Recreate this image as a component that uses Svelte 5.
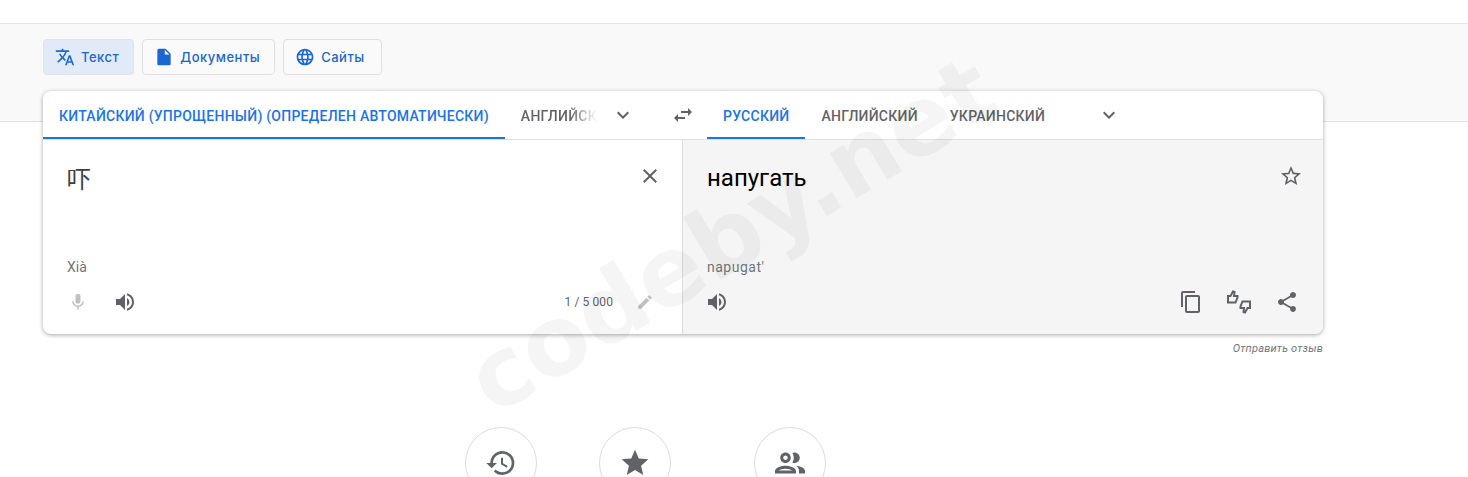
<script>
  const modes = [
    { label: 'Текст', icon: 'text', active: true },
    { label: 'Документы', icon: 'doc' },
    { label: 'Сайты', icon: 'web' }
  ]
  const paths = {
    text: 'M12.87 15.07l-2.54-2.51.03-.03A17.52 17.52 0 0 0 14.07 6H17V4h-7V2H8v2H1v2h11.17C11.5 7.92 10.44 9.75 9 11.35 8.07 10.32 7.3 9.19 6.69 8h-2c.73 1.63 1.73 3.17 2.98 4.56l-5.09 5.02L4 19l5-5 3.11 3.11.76-2.04zM18.5 10h-2L12 22h2l1.12-3h4.75L21 22h2l-4.5-12zm-2.62 7l1.62-4.33L19.12 17h-3.24z',
    doc: 'M14 2H6c-1.1 0-2 .9-2 2v16c0 1.1.9 2 2 2h12c1.1 0 2-.9 2-2V8l-6-6zm-1 7V3.5L18.5 9H13z',
    web: 'M11.99 2C6.47 2 2 6.48 2 12s4.47 10 9.99 10C17.52 22 22 17.52 22 12S17.52 2 11.99 2zm6.93 6h-2.95a15.65 15.65 0 0 0-1.38-3.56A8.03 8.03 0 0 1 18.92 8zM12 4.04c.83 1.2 1.48 2.53 1.91 3.96h-3.82c.43-1.43 1.08-2.76 1.91-3.96zM4.26 14C4.1 13.36 4 12.69 4 12s.1-1.36.26-2h3.38c-.08.66-.14 1.32-.14 2 0 .68.06 1.34.14 2H4.26zm.82 2h2.95c.32 1.25.78 2.45 1.38 3.56A7.987 7.987 0 0 1 5.08 16zm2.95-8H5.08a7.987 7.987 0 0 1 4.33-3.56A15.65 15.65 0 0 0 8.03 8zM12 19.96c-.83-1.2-1.48-2.53-1.91-3.96h3.82c-.43 1.43-1.08 2.76-1.91 3.96zM14.34 14H9.66c-.09-.66-.16-1.32-.16-2 0-.68.07-1.35.16-2h4.68c.09.65.16 1.32.16 2 0 .68-.07 1.34-.16 2zm.25 5.56c.6-1.11 1.06-2.31 1.38-3.56h2.95a8.03 8.03 0 0 1-4.33 3.56zM16.36 14c.08-.66.14-1.32.14-2 0-.68-.06-1.34-.14-2h3.38c.16.64.26 1.31.26 2s-.1 1.36-.26 2h-3.38z',
    chevron: 'M7.41 8.59L12 13.17l4.59-4.58L18 10l-6 6-6-6 1.41-1.41z',
    swap: 'M6.99 11L3 15l3.99 4v-3H14v-2H6.99v-3zM21 9l-3.99-4v3H10v2h7.01v3L21 9z',
    close: 'M19 6.41L17.59 5 12 10.59 6.41 5 5 6.41 10.59 12 5 17.59 6.41 19 12 13.41 17.59 19 19 17.59 13.41 12z',
    mic: 'M12 14c1.66 0 3-1.34 3-3V5c0-1.66-1.34-3-3-3S9 3.34 9 5v6c0 1.66 1.34 3 3 3zm5.3-3c0 3-2.54 5.1-5.3 5.1S6.7 14 6.7 11H5c0 3.41 2.72 6.23 6 6.72V21h2v-3.28c3.28-.48 6-3.3 6-6.72h-1.7z',
    volume: 'M3 9v6h4l5 5V4L7 9H3zm13.5 3A4.5 4.5 0 0 0 14 7.97v8.05c1.48-.73 2.5-2.25 2.5-4.02zM14 3.23v2.06c2.89.86 5 3.54 5 6.71s-2.11 5.85-5 6.71v2.06c4.01-.91 7-4.49 7-8.77s-2.99-7.86-7-8.77z',
    pencil: 'M3 17.25V21h3.75L17.81 9.94l-3.75-3.75L3 17.25zM20.71 7.04a1 1 0 0 0 0-1.41l-2.34-2.34a1 1 0 0 0-1.41 0l-1.83 1.83 3.75 3.75 1.83-1.83z',
    starOutline: 'M22 9.24l-7.19-.62L12 2 9.19 8.63 2 9.24l5.46 4.73L5.82 21 12 17.27 18.18 21l-1.63-7.03L22 9.24zM12 15.4l-3.76 2.27 1-4.28-3.32-2.88 4.38-.38L12 6.1l1.71 4.04 4.38.38-3.32 2.88 1 4.28L12 15.4z',
    copy: 'M16 1H4c-1.1 0-2 .9-2 2v14h2V3h12V1zm3 4H8c-1.1 0-2 .9-2 2v14c0 1.1.9 2 2 2h11c1.1 0 2-.9 2-2V7c0-1.1-.9-2-2-2zm0 16H8V7h11v14z',
    share: 'M18 16.08c-.76 0-1.44.3-1.96.77L8.91 12.7c.05-.23.09-.46.09-.7s-.04-.47-.09-.7l7.05-4.11c.54.5 1.25.81 2.04.81 1.66 0 3-1.34 3-3s-1.34-3-3-3-3 1.34-3 3c0 .24.04.47.09.7L8.04 9.81C7.5 9.31 6.79 9 6 9c-1.66 0-3 1.34-3 3s1.34 3 3 3c.79 0 1.5-.31 2.04-.81l7.12 4.16c-.05.21-.08.43-.08.65 0 1.61 1.31 2.92 2.92 2.92 1.61 0 2.92-1.31 2.92-2.92s-1.31-2.92-2.92-2.92z',
    history: 'M13 3a9 9 0 0 0-9 9H1l3.89 3.89.07.14L9 12H6c0-3.87 3.13-7 7-7s7 3.13 7 7-3.13 7-7 7c-1.93 0-3.68-.79-4.94-2.06l-1.42 1.42A8.954 8.954 0 0 0 13 21a9 9 0 0 0 0-18zm-1 5v5l4.28 2.54.72-1.21-3.5-2.08V8H12z',
    star: 'M12 17.27L18.18 21l-1.64-7.03L22 9.24l-7.19-.61L12 2 9.19 8.63 2 9.24l5.46 4.73L5.82 21z',
    people: 'M9 13.75c-2.34 0-7 1.17-7 3.5V19h14v-1.75c0-2.33-4.66-3.5-7-3.5zM4.34 17c.84-.58 2.87-1.25 4.66-1.25s3.82.67 4.66 1.25H4.34zM9 12c1.93 0 3.5-1.57 3.5-3.5S10.93 5 9 5 5.5 6.57 5.5 8.5 7.07 12 9 12zm0-5c.83 0 1.5.67 1.5 1.5S9.83 10 9 10s-1.5-.67-1.5-1.5S8.17 7 9 7zm7.04 6.81c1.16.84 1.96 1.96 1.96 3.44V19h4v-1.75c0-2.02-3.5-3.17-5.96-3.44zM15 12c1.93 0 3.5-1.57 3.5-3.5S16.93 5 15 5c-.54 0-1.04.13-1.5.35.63.89 1 1.98 1 3.15s-.37 2.26-1 3.15c.46.22.96.35 1.5.35z'
  }
  const shortcuts = [
    { icon: 'history', size: 32 },
    { icon: 'star', size: 32 },
    { icon: 'people', size: 36 }
  ]
</script>

{#snippet icon(name, size = 24)}
  <svg class="ico" width={size} height={size} viewBox="0 0 24 24" aria-hidden="true"><path d={paths[name]} /></svg>
{/snippet}

<main>
  <div class="hero">
    <div class="modes">
      {#each modes as m}
        <button class="mode" class:active={m.active}>
          {@render icon(m.icon, 20)}
          <span>{m.label}</span>
        </button>
      {/each}
    </div>
  </div>

  <section class="card">
    <header class="tabs">
      <div class="tabs-side left">
        <span class="tab on auto">КИТАЙСКИЙ (УПРОЩЕННЫЙ) (ОПРЕДЕЛЕН АВТОМАТИЧЕСКИ)</span>
        <span class="tab clipped">АНГЛИЙСК</span>
        <span class="chev">{@render icon('chevron')}</span>
      </div>
      <span class="swap">{@render icon('swap')}</span>
      <div class="tabs-side right">
        <span class="tab on">РУССКИЙ</span>
        <span class="tab">АНГЛИЙСКИЙ</span>
        <span class="tab">УКРАИНСКИЙ</span>
        <span class="chev">{@render icon('chevron')}</span>
      </div>
    </header>

    <div class="panes">
      <div class="pane source">
        <div class="main-row">
          <div class="big cjk">吓</div>
          <span class="act dark">{@render icon('close')}</span>
        </div>
        <div class="translit">Xià</div>
        <div class="foot">
          <div class="group">
            <span class="act faint mic">{@render icon('mic', 20)}</span>
            <span class="act dark">{@render icon('volume')}</span>
          </div>
          <div class="group counter">
            <span class="count">1 / 5 000</span>
            <span class="act faint">{@render icon('pencil', 18)}</span>
          </div>
        </div>
      </div>
      <div class="pane target">
        <div class="main-row">
          <div class="big">напугать</div>
          <span class="act dark">{@render icon('starOutline')}</span>
        </div>
        <div class="translit">napugat'</div>
        <div class="foot">
          <span class="act dark">{@render icon('volume')}</span>
          <div class="group tools">
            <span class="act dark">{@render icon('copy')}</span>
            <span class="act dark">
              <svg class="rate" width="24" height="24" viewBox="0 0 24 24" aria-hidden="true">
                <path d="M1 6h2.500l2.500-4.500 1.500.5-.5 4h3.500v1.500l-2 5H1z" />
                <path d="M23 18h-2.500l-2.500 4.500-1.500-.5.5-4h-3.500v-1.500l2-5H23z" />
              </svg>
            </span>
            <span class="act dark">{@render icon('share')}</span>
          </div>
        </div>
      </div>
    </div>
  </section>

  <div class="feedback">Отправить отзыв</div>

  <div class="shortcuts">
    {#each shortcuts as s}
      <span class="round">{@render icon(s.icon, s.size)}</span>
    {/each}
  </div>

  <div class="watermark">codeby.net</div>
</main>

<style>
  :global(body) {
    margin: 0;
    background: #fff;
    overflow: hidden;
  }

  main {
    position: relative;
    height: 477px;
    overflow: hidden;
    padding-top: 23px;
    box-sizing: border-box;
    font-family: Roboto, "Liberation Sans", sans-serif;
  }

  .hero {
    height: 99px;
    box-sizing: border-box;
    padding: 15px 43px 0;
    background: #f9f9f9;
    border-top: 1px solid #e3e3e3;
    border-bottom: 1px solid #e3e3e3;
  }

  .modes {
    display: flex;
    gap: 8px;
  }

  .mode {
    display: flex;
    align-items: center;
    gap: 6px;
    height: 36px;
    padding: 0 14px 0 11px;
    box-sizing: border-box;
    background: #fafafa;
    border: 1px solid #e0e0e0;
    border-radius: 4px;
    color: #1a67d2;
    font: 500 13px Inter, Roboto, sans-serif;
    letter-spacing: 0.5px;
  }

  .mode:last-child {
    padding-right: 16px;
  }

  .mode.active {
    background: #e3eaf7;
    border-color: #dde4f0;
  }

  .ico {
    display: block;
    fill: currentColor;
  }

  .rate {
    display: block;
    fill: none;
    stroke: currentColor;
    stroke-width: 2;
  }

  .card {
    position: relative;
    margin: -31px 145px 0 43px;
    background: #fff;
    border-radius: 8px;
    box-shadow: 0 1px 4px rgba(0, 0, 0, 0.35);
    overflow: hidden;
  }

  .tabs {
    display: flex;
    height: 48px;
    border-bottom: 1px solid #e0e0e0;
    box-sizing: content-box;
  }

  .tabs-side {
    display: flex;
    align-items: stretch;
  }

  .tabs-side.left {
    width: 616px;
  }

  .tab {
    display: flex;
    align-items: center;
    padding: 4px 16px 0;
    border-bottom: 2px solid transparent;
    font-size: 14px;
    font-weight: 500;
    letter-spacing: 0.25px;
    color: #5f6368;
    white-space: nowrap;
    box-sizing: border-box;
  }

  .tab.on {
    color: #1a73e8;
    border-bottom-color: #1a73e8;
  }

  .tab.clipped {
    width: 92px;
    padding-right: 0;
    overflow: hidden;
    mask-image: linear-gradient(90deg, #000 70%, transparent 100%);
  }

  .chev {
    display: flex;
    align-items: center;
    color: #5f6368;
    margin-left: 14px;
  }

  .right .chev {
    margin-left: 36px;
  }

  .swap {
    display: flex;
    align-items: center;
    justify-content: center;
    width: 48px;
    color: #5f6368;
  }

  .panes {
    display: flex;
    height: 194px;
  }

  .pane {
    display: flex;
    flex-direction: column;
    box-sizing: border-box;
    padding: 0 24px;
  }

  .source {
    width: 639px;
    padding-right: 20px;
  }

  .target {
    flex: 1;
    background: #f5f5f5;
    border-left: 1px solid #dadce0;
    padding-right: 20px;
  }

  .main-row {
    display: flex;
    justify-content: space-between;
    align-items: flex-start;
    height: 117px;
    padding-top: 24px;
    box-sizing: border-box;
  }

  .big {
    font-size: 24px;
    line-height: 28px;
    color: #000;
  }

  .big.cjk {
    font-family: "Noto Sans CJK SC", sans-serif;
    color: #3c4043;
  }

  .translit {
    font-size: 14px;
    line-height: 20px;
    color: #70757a;
  }

  .target .translit {
    letter-spacing: 0.5px;
  }

  .foot {
    display: flex;
    justify-content: space-between;
    align-items: center;
    margin-top: 13px;
  }

  .target .foot {
    margin-left: -2px;
    padding-right: 4px;
  }

  .group {
    display: flex;
    align-items: center;
    gap: 25px;
  }

  .counter {
    gap: 23px;
    margin-right: 8px;
  }

  .tools {
    gap: 24px;
  }

  .act {
    display: flex;
    align-items: center;
    justify-content: center;
  }

  .mic {
    margin-left: 1px;
  }

  .dark {
    color: #5f6368;
  }

  .faint {
    color: #bdc1c6;
  }

  .count {
    font-size: 12px;
    letter-spacing: 0.1px;
    color: #5f6368;
  }

  .feedback {
    margin: 8px 145px 0 0;
    text-align: right;
    font-size: 11px;
    font-style: italic;
    letter-spacing: 0.2px;
    color: #70757a;
  }

  .shortcuts {
    display: flex;
    gap: 62px;
    margin: 72px 0 0 465px;
  }

  .round {
    display: flex;
    align-items: center;
    justify-content: center;
    width: 72px;
    height: 72px;
    border: 1px solid #dadce0;
    border-radius: 50%;
    box-sizing: border-box;
    color: #5f6368;
  }

  .shortcuts .round:last-child {
    margin-left: 21px;
  }

  /* stock-site stamp sitting over the screenshot */
  .watermark {
    position: absolute;
    left: 434px;
    top: 179px;
    font: 700 96px "DejaVu Sans", sans-serif;
    color: rgba(0, 0, 0, 0.04);
    transform: rotate(-31deg);
    pointer-events: none;
    white-space: nowrap;
  }
</style>
